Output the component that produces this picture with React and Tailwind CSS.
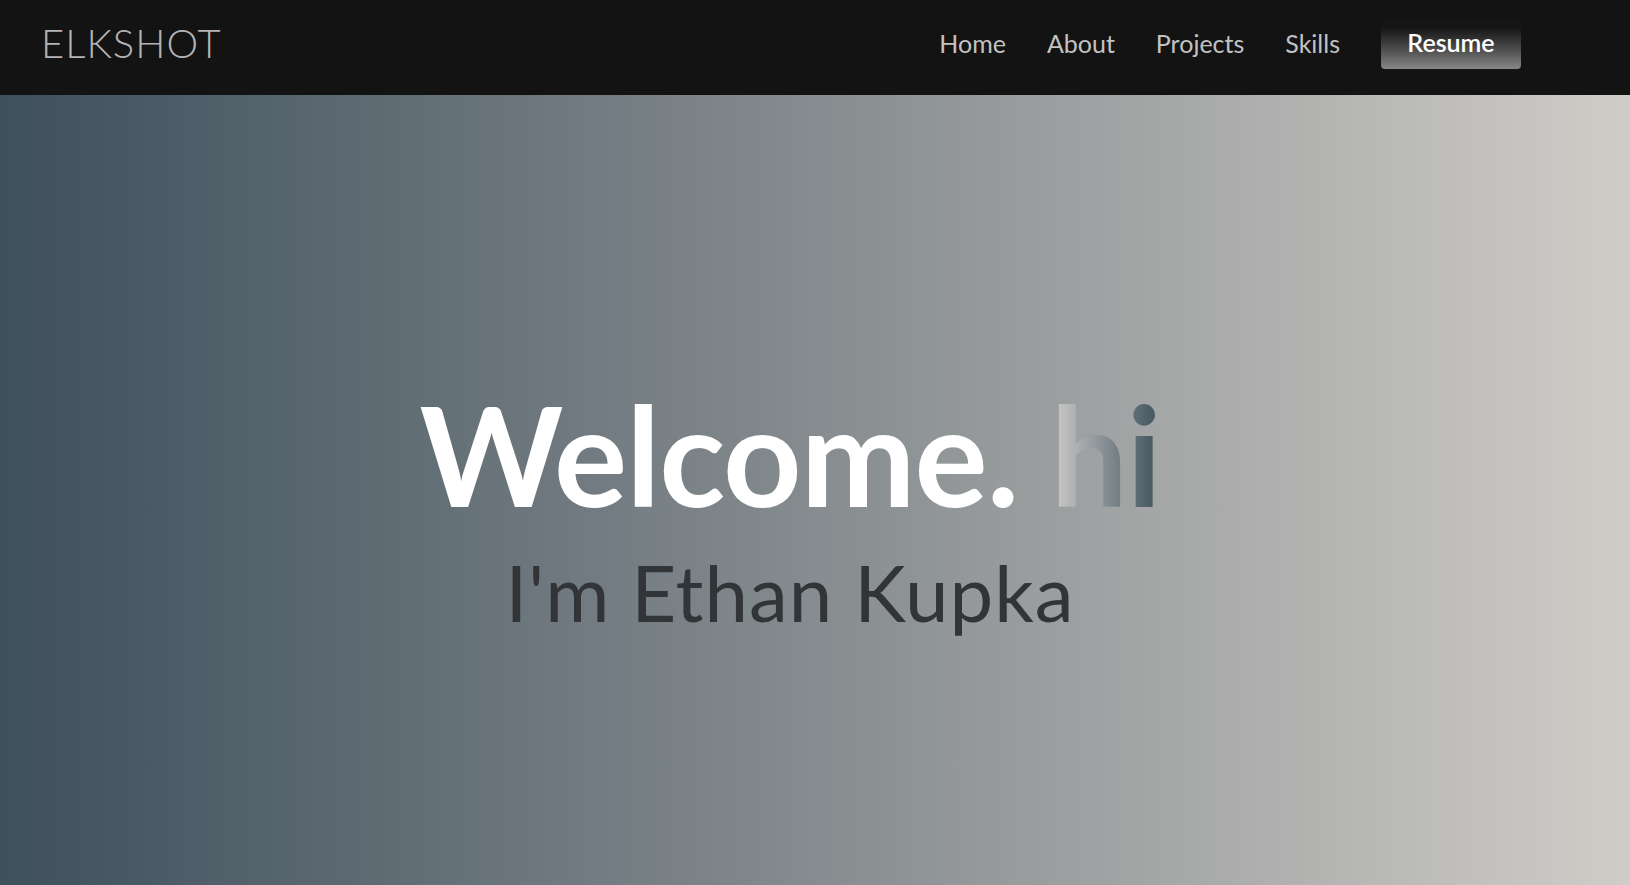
export default function App() {
  return (
    <div className="w-[1630px] h-[885px] flex flex-col overflow-hidden" style={{ fontFamily: "Lato, 'Open Sans', sans-serif" }}>
      <header className="h-[95px] shrink-0 bg-[#131313] flex items-center justify-between pl-[41px] pr-[109px] pb-[9px]">
        <div className="text-[40px] font-light text-[#b4b4b4] tracking-[1px] leading-none">ELKSHOT</div>
        <nav className="flex items-center gap-[41px] text-[25px] text-[#c2c2c2] leading-none">
          <a>Home</a>
          <a>About</a>
          <a>Projects</a>
          <a>Skills</a>
          <button className="w-[140px] h-[49px] mt-[2px] pb-[4px] rounded-[4px] bg-gradient-to-b from-[#151515] from-15% to-[#878787] text-white text-[25px] font-semibold">Resume</button>
        </nav>
      </header>
      <main className="flex-1 bg-gradient-to-r from-[#3e505c] via-[#868c8f] to-[#d0cdc8] flex flex-col items-center justify-center pr-[50px] pt-[36px]">
        <h1 className="text-[137px] font-bold text-white leading-none tracking-[-1px]">
          Welcome.{" "}
          <span className="bg-gradient-to-r from-[#d2cdcd] to-[#3d525a] bg-clip-text text-transparent">hi</span>
        </h1>
        <p className="mt-[30px] text-[78px] text-[#323537] leading-none tracking-[1px]">I'm Ethan Kupka</p>
      </main>
    </div>
  );
}
